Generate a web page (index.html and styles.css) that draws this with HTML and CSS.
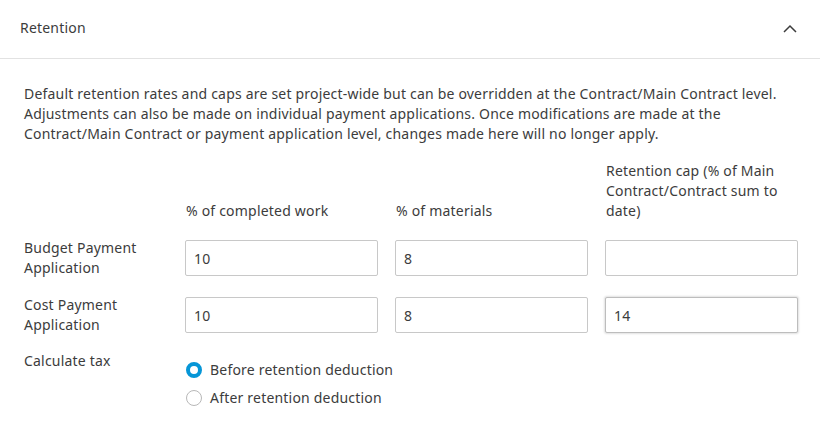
FILE: index.html
```html
<!DOCTYPE html>
<html lang="en">
<head>
<meta charset="utf-8">
<title>Retention</title>
<link rel="stylesheet" href="styles.css">
</head>
<body>
<section class="panel">
  <header class="panel-header">
    <span class="panel-title">Retention</span>
    <button class="collapse-btn" aria-label="Collapse">
      <svg width="14" height="9" viewBox="0 0 14 9"><path d="M1 8 L7 2 L13 8" fill="none" stroke="#3c3c3c" stroke-width="1.5"/></svg>
    </button>
  </header>
  <div class="panel-body">
    <p class="description">Default retention rates and caps are set project-wide but can be overridden at the Contract/Main Contract level. Adjustments can also be made on individual payment applications. Once modifications are made at the Contract/Main Contract or payment application level, changes made here will no longer apply.</p>

    <div class="row row-head">
      <div></div>
      <div class="col-head">% of completed work</div>
      <div class="col-head">% of materials</div>
      <div class="col-head">Retention cap (% of Main Contract/Contract sum to date)</div>
    </div>

    <div class="row row-input">
      <div class="row-label">Budget Payment Application</div>
      <input class="field" type="text" value="10">
      <input class="field" type="text" value="8">
      <input class="field" type="text" value="">
    </div>

    <div class="row row-input">
      <div class="row-label">Cost Payment Application</div>
      <input class="field" type="text" value="10">
      <input class="field" type="text" value="8">
      <input class="field field-hover" type="text" value="14">
    </div>

    <div class="row row-tax">
      <div class="row-label">Calculate tax</div>
      <div class="radio-group">
        <label class="radio"><span class="radio-dot checked"></span>Before retention deduction</label>
        <label class="radio"><span class="radio-dot"></span>After retention deduction</label>
      </div>
    </div>
  </div>
</section>
</body>
</html>
```
FILE: styles.css
```css
* { box-sizing: border-box; }
html, body { margin: 0; padding: 0; background: #fff; }
body {
  font-family: "Noto Sans", "Open Sans", sans-serif;
  font-size: 14px;
  line-height: 20px;
  letter-spacing: 0.2px;
  color: #3c3c3c;
}
.panel { width: 820px; }
.panel-header {
  height: 59px;
  display: flex;
  align-items: center;
  justify-content: space-between;
  padding: 0 20px 2px 20px;
  border-bottom: 1px solid #e2e2e2;
}
.panel-title { font-size: 14px; }
.collapse-btn {
  border: 0;
  background: none;
  padding: 0;
  width: 16px;
  height: 16px;
  display: flex;
  align-items: center;
  justify-content: center;
  margin-right: 2px;
}
.panel-body { padding: 25px 22px 20px 24px; }
.description { margin: 0 0 17px 0; }
.row {
  display: grid;
  grid-template-columns: 144px 193px 193px 193px;
  column-gap: 17px;
}
.row-head { align-items: end; margin-bottom: 17px; }
.col-head { padding-left: 1px; }
.row-input { align-items: start; margin-bottom: 17px; }
.row-label { padding-right: 8px; }
.field {
  margin-top: 2px;
  height: 36px;
  width: 193px;
  border: 1px solid #c8c8c8;
  border-radius: 2px;
  padding: 0 8px;
  font-family: inherit;
  font-size: 14px;
  letter-spacing: 0.2px;
  color: #3c3c3c;
  background: #fff;
  outline: none;
}
.field-hover { border-color: #bdbdbd; box-shadow: 0 0 2px 1px rgba(0,0,0,0.12); }
.row-tax { align-items: start; margin-top: -1px; }
.radio-group { padding-top: 5px; display: flex; flex-direction: column; }
.radio {
  display: flex;
  align-items: center;
  height: 28px;
  gap: 8px;
  white-space: nowrap;
  cursor: pointer;
}
.radio-dot {
  flex: none;
  width: 16px;
  height: 16px;
  border-radius: 50%;
  border: 1px solid #b8b8b8;
  background: #fff;
  margin-left: 1px;
}
.radio-dot.checked { border: 4px solid #0696d7; }
```
